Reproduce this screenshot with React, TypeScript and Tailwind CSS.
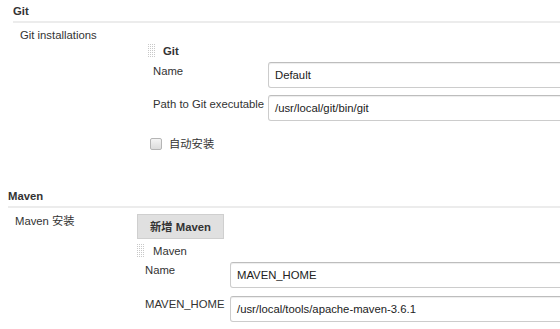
import React from 'react';

const font = { fontFamily: '"Liberation Sans", Arial, "Noto Sans CJK SC", sans-serif' };

function Grip() {
  const dots: React.ReactNode[] = [];
  for (let r = 0; r < 7; r++) {
    for (let c = 0; c < 4; c++) {
      dots.push(<rect key={`${r}-${c}`} x={c * 2} y={r * 2} width="1" height="1" fill="#c8c8c8" />);
    }
  }
  return (
    <svg width="8" height="14" viewBox="0 0 8 14" className="shrink-0">
      {dots}
    </svg>
  );
}

function TextInput({ value }: { value: string }) {
  return (
    <div className="h-[26px] w-[420px] flex items-center pl-[6px] border border-[#ccc] border-t-[#bdbdbd] rounded-l-[3px] bg-white shadow-[inset_0_1px_1px_rgba(0,0,0,0.075)] text-[#222]">
      {value}
    </div>
  );
}

function SectionHeader({ title }: { title: string }) {
  return (
    <div className="h-[23px] flex items-center font-bold text-[#333] border-b-2 border-[#ececec]">
      {title}
    </div>
  );
}

export default function App() {
  return (
    <div
      className="w-[560px] h-[329px] overflow-hidden bg-white text-[11.3px] leading-[14px] text-[#333]"
      style={font}
    >
      {/* Git */}
      <div className="pl-[13px]">
        <SectionHeader title="Git" />
        <div className="flex">
          <div className="w-[135px] shrink-0 pl-[7px] pt-[5px]">Git installations</div>
          <div className="pt-[21px] flex-1">
            <div className="h-[14px] flex items-center gap-[7px]">
              <Grip />
              <span className="font-bold">Git</span>
            </div>
            <div className="ml-[5px] mt-[4px] grid grid-cols-[115px_1fr] gap-y-[7px]">
              <div className="pt-[2px]">Name</div>
              <TextInput value="Default" />
              <div className="pt-[2px]">Path to Git executable</div>
              <TextInput value="/usr/local/git/bin/git" />
            </div>
            <div className="mt-[17px] ml-[2px] flex items-center gap-[7px] h-[12px]">
              <div className="w-[12px] h-[12px] rounded-[2px] border border-[#b5b5b5] bg-gradient-to-b from-[#f4f4f4] to-[#dcdcdc]" />
              <span>自动安装</span>
            </div>
          </div>
        </div>
      </div>

      {/* Maven */}
      <div className="pl-[8px] mt-[35px]">
        <SectionHeader title="Maven" />
        <div className="flex">
          <div className="w-[129px] shrink-0 pl-[7px] pt-[6px]">Maven 安装</div>
          <div className="pt-[6px] flex-1">
            <button className="w-[87px] h-[25px] bg-[#e0e0e0] border border-[#cfcfcf] font-bold text-[#333] text-[11.3px] leading-[14px]">
              新增 Maven
            </button>
            <div className="mt-[5px] h-[14px] flex items-center gap-[8px]">
              <Grip />
              <span>Maven</span>
            </div>
            <div className="ml-[8px] mt-[4px] grid grid-cols-[85px_1fr] gap-y-[7px]">
              <div className="pt-[1px]">Name</div>
              <TextInput value="MAVEN_HOME" />
              <div className="pt-[2px]">MAVEN_HOME</div>
              <div className="pt-[1px]">
                <TextInput value="/usr/local/tools/apache-maven-3.6.1" />
              </div>
            </div>
          </div>
        </div>
      </div>
    </div>
  );
}
